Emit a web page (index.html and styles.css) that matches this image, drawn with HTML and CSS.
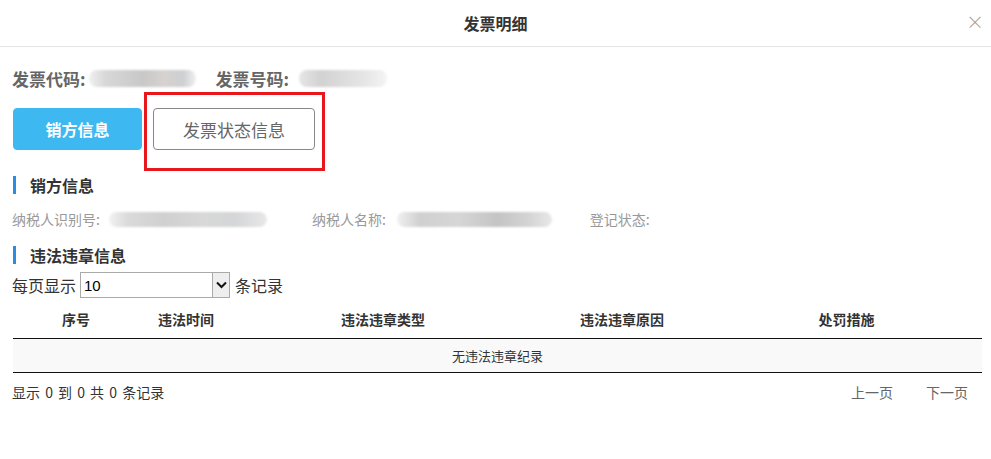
FILE: index.html
```html
<!DOCTYPE html>
<html>
<head>
    <meta charset="utf-8" />
    <title>发票明细</title>
    <link rel="stylesheet" href="styles.css">
</head>
<body>
<div class="modal">
    <!-- Header -->
    <div class="modal-header">
        <div class="modal-title">发票明细</div>
        <span class="close">×</span>
    </div>

    <div class="modal-body">
        <div class="invoice-line">
            <span class="label">发票代码:</span>
            <span class="mask mask-a"></span>
            <span class="label">发票号码:</span>
            <span class="mask mask-b"></span>
        </div>

        <div class="tabs">
            <button class="tab active">销方信息</button>
            <button class="tab">发票状态信息</button>
            <div class="highlight"></div>
        </div>

        <div class="section-title">销方信息</div>
        <div class="info-row">
            <span class="info-label">纳税人识别号:</span>
            <span class="mask mask-c"></span>
            <span class="info-label">纳税人名称:</span>
            <span class="mask mask-d"></span>
            <span class="info-label">登记状态:</span>
        </div>

        <div class="section-title">违法违章信息</div>
        <div class="length-row">
            <span>每页显示</span>
            <div class="select-box">
                <span>10</span>
                <span class="arrow">
                    <svg width="11" height="8" viewBox="0 0 11 8"><path d="M1 1.5 L5.5 6 L10 1.5" fill="none" stroke="#111" stroke-width="2"/></svg>
                </span>
            </div>
            <span>条记录</span>
        </div>

        <table class="grid">
            <colgroup>
                <col style="width:126px">
                <col style="width:94px">
                <col style="width:300px">
                <col style="width:178px">
                <col style="width:271px">
            </colgroup>
            <thead>
                <tr>
                    <th>序号</th>
                    <th>违法时间</th>
                    <th>违法违章类型</th>
                    <th>违法违章原因</th>
                    <th>处罚措施</th>
                </tr>
            </thead>
            <tbody>
                <tr><td colspan="5">无违法违章纪录</td></tr>
            </tbody>
        </table>

        <div class="pager">
            <span>显示 0 到 0 共 0 条记录</span>
            <div class="pager-links">
                <span>上一页</span>
                <span>下一页</span>
            </div>
        </div>
    </div>
</div>
</body>
</html>
```

FILE: styles.css
```css
* {
  box-sizing: border-box;
}
body {
  margin: 0;
  padding: 0;
  font-family: "Noto Sans CJK SC", "Noto Sans", sans-serif;
  background-color: #fff;
  color: #333;
}
.modal-header {
  height: 47px;
  display: flex;
  align-items: center;
  justify-content: center;
  border-bottom: 1px solid #e5e5e5;
  position: relative;
}
.modal-title {
  font-size: 16px;
  font-weight: bold;
  color: #333;
}
.close {
  position: absolute;
  right: 7px;
  top: 8px;
  font-size: 18px;
  color: #999;
  font-weight: 300;
}
.modal-body {
  padding: 0 9px 0 12px;
}
.invoice-line {
  display: flex;
  align-items: center;
  height: 22px;
  margin-top: 20px;
  font-size: 17px;
  font-weight: bold;
  color: #666;
}
.label {
  margin-right: 3px;
}
.mask {
  display: inline-block;
  height: 17px;
  border-radius: 8px;
  filter: blur(1px);
}
.mask-a {
  width: 107px;
  margin-right: 20px;
  background: linear-gradient(90deg, #f0f0f0 0%, #d8d8d8 15%, #cfcfcf 35%, #c8c8c8 50%, #d6d2d0 70%, #cdd0d2 88%, #f0f0f0 100%);
}
.mask-b {
  width: 88px;
  margin-left: 7px;
  background: linear-gradient(90deg, #e6e6e6 0%, #d2d2d2 25%, #dcdcdc 50%, #e6e6e6 75%, #f4f4f4 100%);
}
.tabs {
  display: flex;
  margin-top: 19px;
  position: relative;
  height: 42px;
}
.tab {
  font-family: inherit;
  font-size: 17px;
  height: 42px;
  border-radius: 4px;
  background: #fff;
  border: 1px solid #888;
  color: #666;
  padding: 0;
  width: 162px;
  margin-left: 11px;
}
.tab.active {
  font-size: 16px;
  width: 129px;
  margin-left: 1px;
  background: #3db8f0;
  border-color: #3db8f0;
  color: #fff;
  font-weight: bold;
}
.highlight {
  position: absolute;
  left: 132px;
  top: -16px;
  width: 181px;
  height: 79px;
  border: 3px solid #e8171b;
}
.section-title {
  font-size: 16px;
  font-weight: bold;
  color: #333;
  border-left: 3px solid #2d8ce0;
  padding-left: 14px;
  margin-left: 1px;
  height: 18px;
  line-height: 18px;
}
.tabs + .section-title {
  margin-top: 26px;
}
.info-row {
  display: flex;
  align-items: center;
  font-size: 14px;
  color: #999;
  height: 20px;
  margin-top: 15px;
  margin-bottom: 17px;
}
.info-label {
  margin-right: 9px;
}
.mask-c {
  width: 158px;
  height: 15px;
  margin-right: 45px;
  background: linear-gradient(90deg, #f2f2f2 0%, #dadada 12%, #d0d0d0 35%, #d8d8d8 60%, #d4d6d7 80%, #e8e8e8 100%);
}
.mask-d {
  width: 155px;
  height: 15px;
  margin-right: 38px;
  margin-left: 2px;
  background: linear-gradient(90deg, #f0f0f0 0%, #d0d0d0 15%, #d6d6d6 40%, #c4c4c4 65%, #d4d4d4 85%, #e8e8e8 100%);
}
.length-row {
  display: flex;
  align-items: center;
  margin-top: 8px;
  font-size: 16px;
  color: #333;
  height: 26px;
}
.select-box {
  width: 150px;
  height: 26px;
  margin: 0 5px 0 4px;
  border: 1px solid #aaa;
  display: flex;
  align-items: center;
  justify-content: space-between;
  padding-left: 3px;
  font-family: "Liberation Sans", sans-serif;
  font-size: 15px;
  color: #000;
}
.arrow {
  width: 17px;
  height: 24px;
  border-left: 1px solid #aaa;
  background: #eee;
  display: flex;
  align-items: center;
  justify-content: center;
}
.grid {
  width: 969px;
  margin-left: 1px;
  margin-top: 10px;
  border-collapse: collapse;
  table-layout: fixed;
  font-size: 14px;
}
.grid th {
  font-weight: bold;
  color: #333;
  height: 30px;
  padding: 0 0 8px;
  border-bottom: 1px solid #111;
}
.grid td {
  background: #f9f9f9;
  text-align: center;
  height: 34px;
  font-size: 13px;
  color: #333;
  border-bottom: 1px solid #111;
}
.pager {
  display: flex;
  justify-content: space-between;
  align-items: center;
  margin-top: 9px;
  font-size: 14px;
  color: #333;
}
.pager > span {
  word-spacing: 2px;
}
.pager-links {
  display: flex;
  gap: 33px;
  color: #666;
  margin-right: 14px;
}
```
